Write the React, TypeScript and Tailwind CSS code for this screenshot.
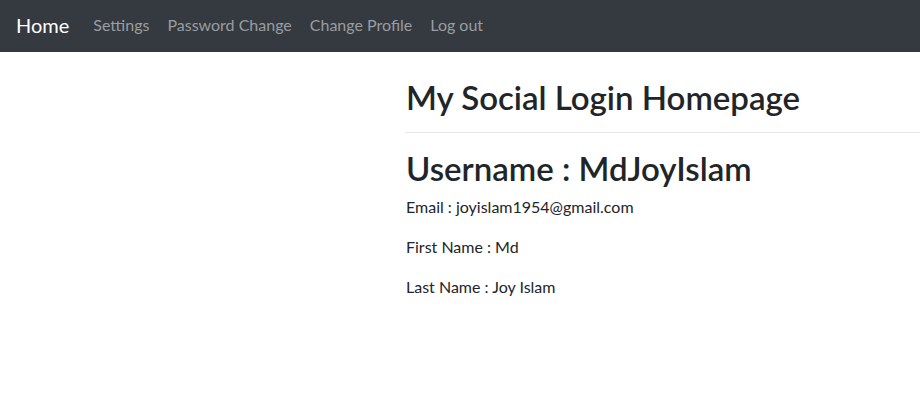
export default function App() {
  const links = ["Settings", "Password Change", "Change Profile", "Log out"];

  return (
    <div className="min-h-screen bg-white text-[#212529] font-['Lato',sans-serif]">
      {/* navbar */}
      <nav className="h-[52px] bg-[#343a40] flex items-center px-4 pb-[2px]">
        <a className="text-white text-[20px] mr-[24px]">Home</a>
        <div className="flex items-center gap-[18px]">
          {links.map((l) => (
            <a key={l} className="text-[16px] text-[#9a9da0]">
              {l}
            </a>
          ))}
        </div>
      </nav>

      {/* content */}
      <div className="flex overflow-hidden">
        <div className="w-[406px] shrink-0" />
        <div className="flex-1 pt-[26px]">
          <h2 className="text-[33px] leading-[38px] font-semibold">My Social Login Homepage</h2>
          <hr className="mt-[16px] mb-[16px] border-t border-[#e5e5e5]" />
          <h1 className="text-[33px] leading-[38px] font-semibold mb-[8px]">Username : MdJoyIslam</h1>
          <p className="text-[16px] leading-6 mb-4">Email : joyislam1954@gmail.com</p>
          <p className="text-[16px] leading-6 mb-4">First Name : Md</p>
          <p className="text-[16px] leading-6 mb-4">Last Name : Joy Islam</p>
        </div>
      </div>
    </div>
  );
}
